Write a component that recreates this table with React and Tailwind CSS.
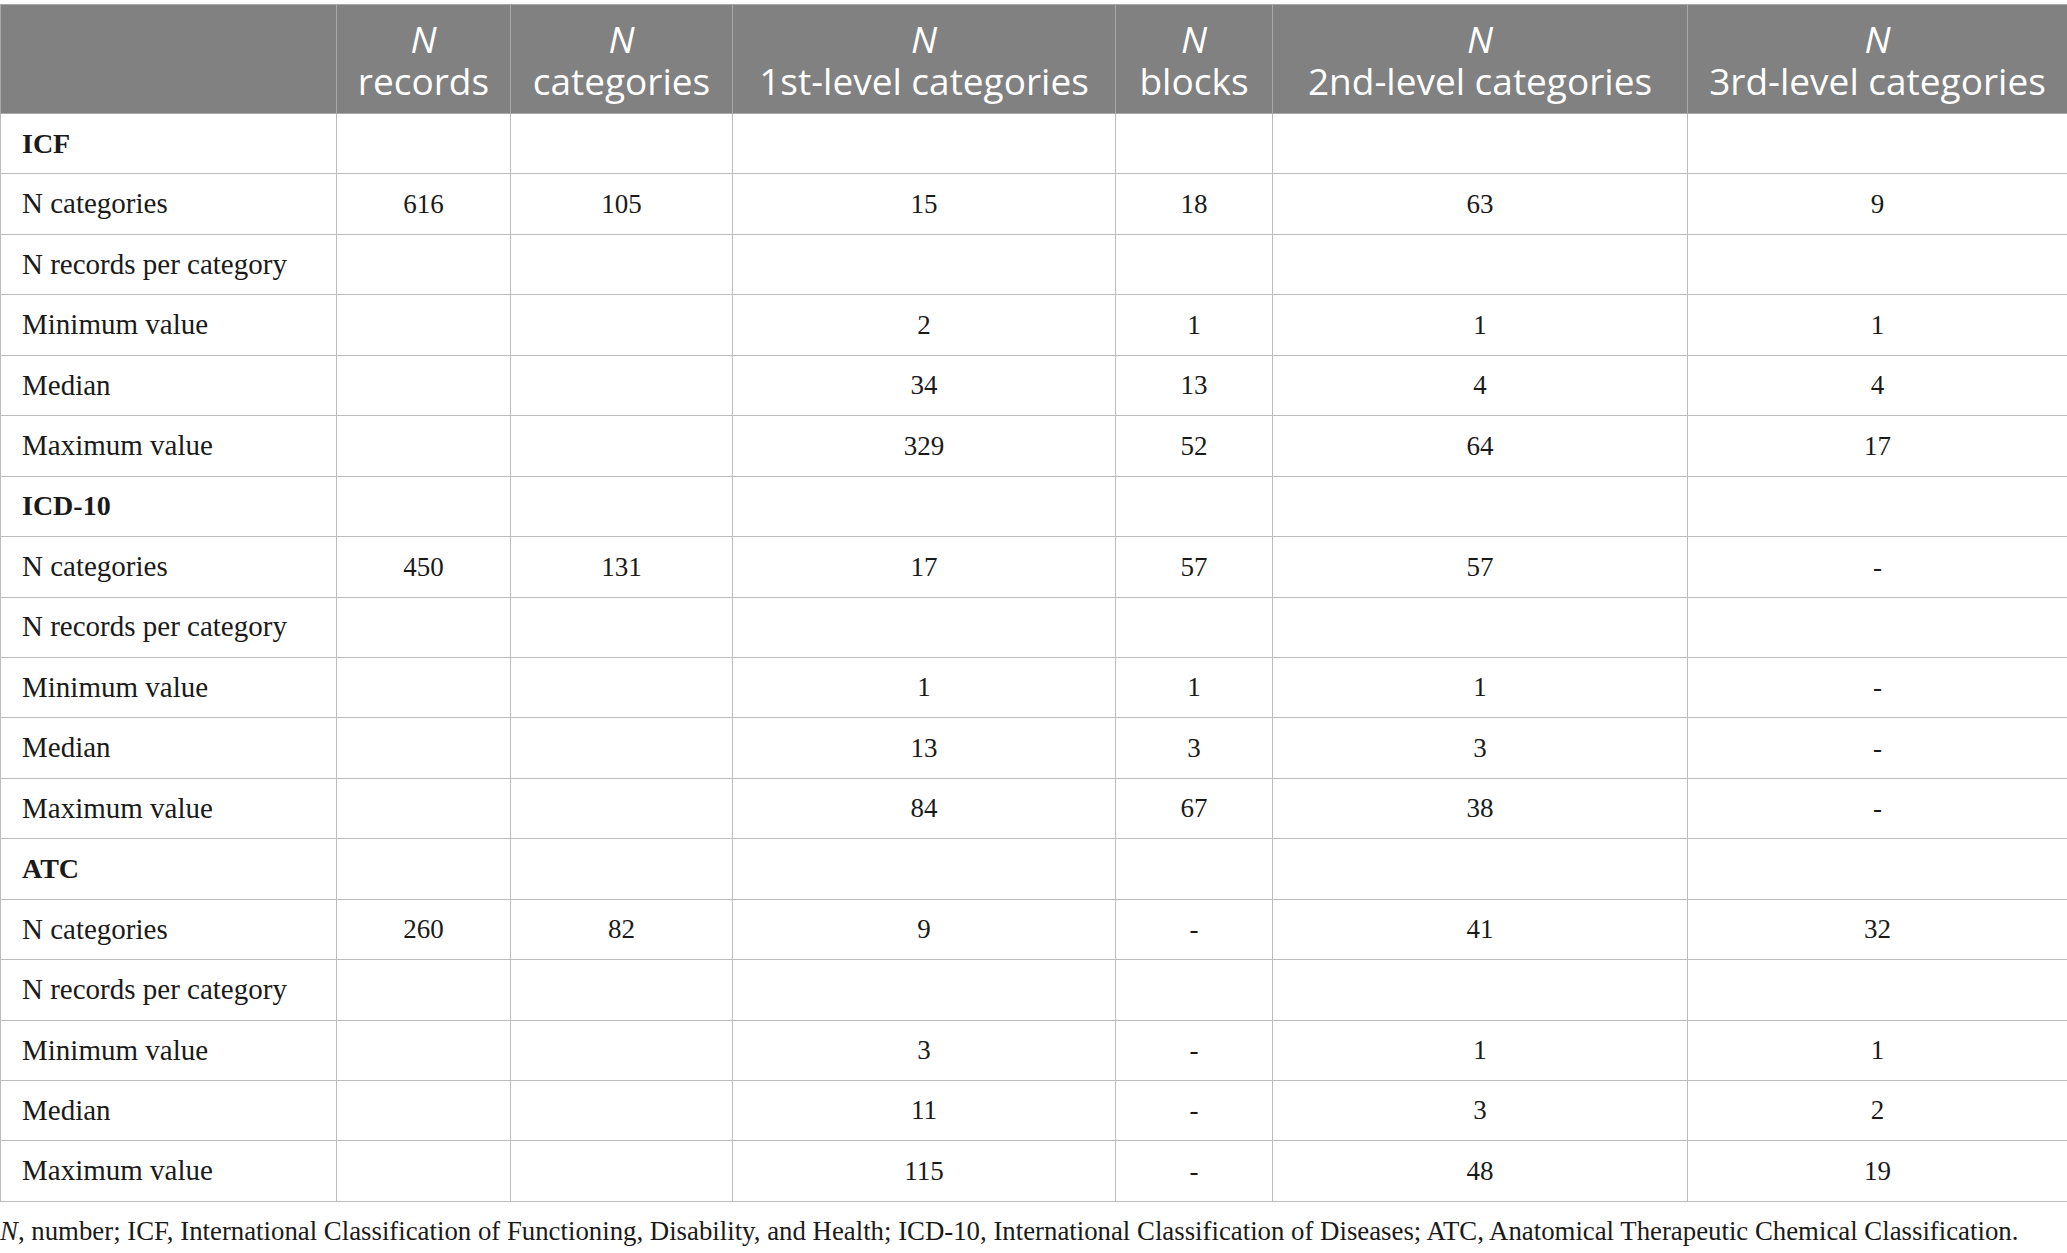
const cols = ['w-[336px]', 'w-[174px]', 'w-[222px]', 'w-[383px]', 'w-[157px]', 'w-[415px]', 'w-[380px]'];

const headers = ['records', 'categories', '1st-level categories', 'blocks', '2nd-level categories', '3rd-level categories'];

const sections = [
  {
    name: 'ICF',
    rows: [
      ['N categories', '616', '105', '15', '18', '63', '9'],
      ['N records per category', '', '', '', '', '', ''],
      ['Minimum value', '', '', '2', '1', '1', '1'],
      ['Median', '', '', '34', '13', '4', '4'],
      ['Maximum value', '', '', '329', '52', '64', '17'],
    ],
  },
  {
    name: 'ICD-10',
    rows: [
      ['N categories', '450', '131', '17', '57', '57', '-'],
      ['N records per category', '', '', '', '', '', ''],
      ['Minimum value', '', '', '1', '1', '1', '-'],
      ['Median', '', '', '13', '3', '3', '-'],
      ['Maximum value', '', '', '84', '67', '38', '-'],
    ],
  },
  {
    name: 'ATC',
    rows: [
      ['N categories', '260', '82', '9', '-', '41', '32'],
      ['N records per category', '', '', '', '', '', ''],
      ['Minimum value', '', '', '3', '-', '1', '1'],
      ['Median', '', '', '11', '-', '3', '2'],
      ['Maximum value', '', '', '115', '-', '48', '19'],
    ],
  },
];

const cell = 'border border-[#bcbcbc] h-[60.45px] p-0 align-middle';

export default function App() {
  return (
    <div className="bg-white w-[2067px] h-[1253px] pt-[4px] font-['Liberation_Serif',serif] text-[#1a1a1a]">
      <table className="w-[2067px] border-collapse table-fixed">
        <colgroup>
          {cols.map((c, i) => <col key={i} className={c} />)}
        </colgroup>
        <thead>
          <tr className="bg-[#808180] text-white font-['Open_Sans',sans-serif] text-[37px] leading-[42px]">
            <th className="border border-[#a8a8a8] h-[109px]"></th>
            {headers.map((h) => (
              <th key={h} className="border border-[#a8a8a8] font-normal text-center pt-[2px] whitespace-nowrap">
                <span className="italic">N</span>
                <br />
                {h}
              </th>
            ))}
          </tr>
        </thead>
        <tbody className="text-[27px]">
          {sections.map((s) => (
            <>
              <tr key={s.name}>
                <td className={`${cell} pl-[21px] font-bold text-[28px]`}>{s.name}</td>
                {[0, 1, 2, 3, 4, 5].map((i) => <td key={i} className={cell}></td>)}
              </tr>
              {s.rows.map((r, ri) => (
                <tr key={s.name + ri}>
                  <td className={`${cell} pl-[21px] whitespace-nowrap text-[29px]`}>{r[0]}</td>
                  {r.slice(1).map((v, i) => (
                    <td key={i} className={`${cell} text-center`}>{v}</td>
                  ))}
                </tr>
              ))}
            </>
          ))}
        </tbody>
      </table>
      <p className="text-[26.8px] mt-[9px] whitespace-nowrap">
        <span className="italic">N</span>, number; ICF, International Classification of Functioning, Disability, and Health; ICD-10, International Classification of Diseases; ATC, Anatomical Therapeutic Chemical Classification.
      </p>
    </div>
  );
}
